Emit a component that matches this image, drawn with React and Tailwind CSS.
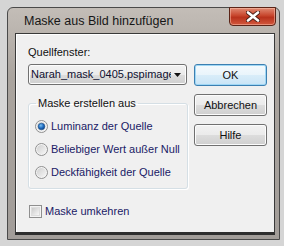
const FONT = { fontFamily: '"Liberation Sans", Arial, sans-serif' };

function Radio({ checked }) {
  return (
    <svg width="13" height="13" viewBox="0 0 13 13" className="shrink-0">
      <defs>
        <linearGradient id="rbg" x1="0" y1="0" x2="1" y2="1">
          <stop offset="0" stopColor="#cfcfcf" />
          <stop offset="1" stopColor="#f6f6f6" />
        </linearGradient>
        <radialGradient id="rdot" cx="0.4" cy="0.35" r="0.7">
          <stop offset="0" stopColor="#7cc0ef" />
          <stop offset="0.55" stopColor="#1f6cc2" />
          <stop offset="1" stopColor="#0c3e7e" />
        </radialGradient>
      </defs>
      <circle cx="6.5" cy="6.5" r="6" fill="#f4f4f4" stroke="#8f8f8f" />
      <circle cx="6.5" cy="6.5" r="4.6" fill="url(#rbg)" />
      {checked && <circle cx="6.5" cy="6.5" r="3.3" fill="url(#rdot)" stroke="#1c4f85" strokeWidth="0.6" />}
    </svg>
  );
}

function Button({ children, focused }) {
  return (
    <div
      className={
        "h-[22px] w-[73px] rounded-[3px] border flex items-center justify-center text-[11px] text-[#111] " +
        (focused
          ? "border-[#3c7fb1] bg-[linear-gradient(#f4fafd_0%,#e9f4fb_50%,#d9edf9_50%,#c9e4f6_100%)] shadow-[inset_0_0_0_1px_#9fd7f5]"
          : "border-[#707070] bg-[linear-gradient(#f2f2f2_0%,#ebebeb_50%,#dddddd_50%,#cfcfcf_100%)] shadow-[inset_0_0_0_1px_#fcfcfc]")
      }
    >
      {children}
    </div>
  );
}

export default function App() {
  return (
    <div className="w-[284px] h-[246px] bg-[#d5d5d5] pt-[7px] pl-[7px] overflow-hidden" style={FONT}>
      <div className="relative w-[273px] h-[233px] border border-[#4a4a4a] rounded-t-[6px] bg-[linear-gradient(#c3bdb7,#aaa49e_30%,#a29d99)] flex flex-col pl-[7px] pr-[4px] pb-[4px]">
        {/* title bar */}
        <div className="h-[25px] flex items-center pl-[9px] pt-[2px] text-[12.5px] text-[#161616] shrink-0">
          Maske aus Bild hinzufügen
        </div>
        <div className="absolute -top-px right-[3px] w-[47px] h-[19px] rounded-b-[4px] border border-[#5b2417] bg-[linear-gradient(#e08a73,#c7452c_45%,#b8321c_55%,#d2583e)] shadow-[inset_0_0_0_1px_rgba(255,200,180,0.5)] flex items-center justify-center">
          <svg width="14" height="11" viewBox="0 0 14 11">
            <path d="M2 1.5 L12 9.5 M12 1.5 L2 9.5" stroke="#4a2018" strokeWidth="4.4" strokeLinecap="round" />
            <path d="M2 1.5 L12 9.5 M12 1.5 L2 9.5" stroke="#ffffff" strokeWidth="2.6" strokeLinecap="round" />
          </svg>
        </div>

        {/* content */}
        <div className="flex-1 border border-[#393939] border-b-[3px] border-b-[#2e2e2e] bg-[#f0f0f0] shadow-[inset_1px_1px_0_#ffffff] pl-[12px] pt-[12px] flex">
          <div className="w-[160px] flex flex-col">
            <div className="h-[13px] leading-[13px] text-[11px] text-[#111]">Quellfenster:</div>
            <div className="mt-[5px] w-[159px] h-[21px] rounded-[3px] border border-[#707070] bg-[linear-gradient(#f2f2f2_0%,#ebebeb_50%,#dddddd_50%,#cfcfcf_100%)] shadow-[inset_0_0_0_1px_#fcfcfc] flex items-center pl-[2px]">
              <span className="w-[140px] overflow-hidden whitespace-nowrap text-[11px] text-[#101030]">
                Narah_mask_0405.pspimage
              </span>
              <svg width="7" height="4" viewBox="0 0 7 4" className="ml-[3px]">
                <path d="M0 0 H7 L3.5 4 Z" fill="#111" />
              </svg>
            </div>

            <fieldset className="mt-[12px] w-[160px] border border-[#d5dfe5] rounded-[3px] shadow-[inset_1px_1px_0_#ffffff,1px_1px_0_#ffffff] pl-[6px] pb-[8px]">
              <legend className="ml-[1px] px-[2px] text-[11px] leading-[13px] text-[#111]">Maske erstellen aus</legend>
              <div className="pt-[8px] flex flex-col gap-[7px]">
                {[
                  ["Luminanz der Quelle", true],
                  ["Beliebiger Wert außer Null", false],
                  ["Deckfähigkeit der Quelle", false],
                ].map(([label, checked]) => (
                  <div key={label} className="h-[16px] flex items-center gap-[3px] text-[11px] text-[#1a1a66]">
                    <Radio checked={checked} />
                    <span>{label}</span>
                  </div>
                ))}
              </div>
            </fieldset>

            <div className="mt-[14px] h-[16px] flex items-center gap-[3px] text-[11px] text-[#1a1a66] pl-[1px]">
              <div className="w-[13px] h-[13px] border border-[#8f8f8f] bg-[#f4f4f4] p-[1px]">
                <div className="w-full h-full bg-[linear-gradient(135deg,#cbcbcb,#f7f7f7)] border border-[#dedede]" />
              </div>
              <span>Maske umkehren</span>
            </div>
          </div>

          <div className="ml-[6px] mt-[18px] flex flex-col gap-[8px]">
            <Button focused>OK</Button>
            <Button>Abbrechen</Button>
            <Button>Hilfe</Button>
          </div>
        </div>
      </div>
    </div>
  );
}
